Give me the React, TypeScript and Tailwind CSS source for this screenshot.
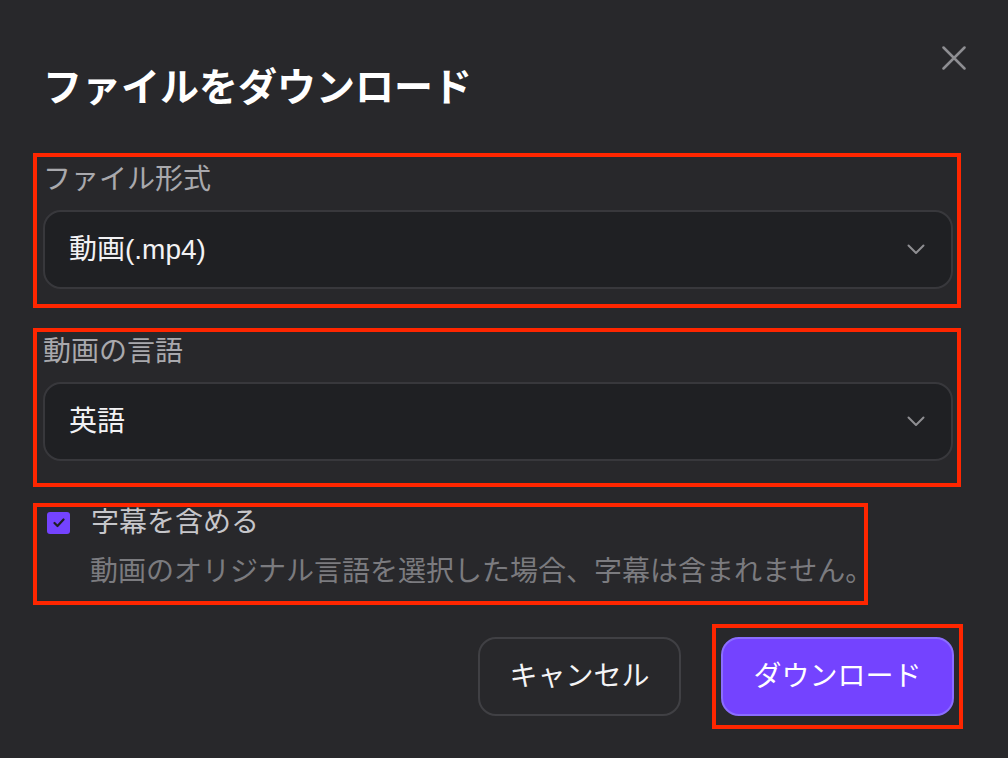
import React from "react";

const font = {
  fontFamily: '"Liberation Sans", "Noto Sans CJK JP", sans-serif',
};

const Chevron = () => (
  <svg width="18" height="11" viewBox="0 0 18 11" fill="none">
    <path d="M1.5 1.5L9 9L16.5 1.5" stroke="#8e8e92" strokeWidth="2" strokeLinecap="round" strokeLinejoin="round" />
  </svg>
);

const SelectBox = ({ value }: { value: string }) => (
  <div className="flex h-[79px] items-center justify-between rounded-[18px] border-2 border-[#38383c] bg-[#1f2023] pl-[24px] pr-[26px]">
    <span className="text-[28px] leading-[36px] text-[#f2f2f4]">{value}</span>
    <Chevron />
  </div>
);

export default function App() {
  return (
    <div style={font} className="h-[758px] w-[1008px] overflow-hidden bg-[#28282b] pl-[33px]">
      {/* header */}
      <div className="flex h-[107px] items-start justify-between pr-[42px] pt-[46px]">
        <h1 className="mt-[18px] pl-[10px] text-[39px] font-bold leading-[48px] text-white">
          ファイルをダウンロード
        </h1>
        <button className="h-[24px] w-[24px]">
          <svg width="24" height="24" viewBox="0 0 24 24" fill="none">
            <path d="M1.5 1.5L22.5 22.5M22.5 1.5L1.5 22.5" stroke="#8e8e92" strokeWidth="2.5" strokeLinecap="round" />
          </svg>
        </button>
      </div>

      {/* file format */}
      <div className="mt-[46px] w-[928px] border-4 border-[#ff2600] pb-[15px] pl-[6px] pr-[4px] pt-[5px]">
        <div className="text-[28px] leading-[36px] text-[#a9a9ad]">ファイル形式</div>
        <div className="mt-[12px]">
          <SelectBox value="動画(.mp4)" />
        </div>
      </div>

      {/* language */}
      <div className="mt-[20px] w-[928px] border-4 border-[#ff2600] pb-[22px] pl-[6px] pr-[4px] pt-[2px]">
        <div className="text-[28px] leading-[36px] text-[#a9a9ad]">動画の言語</div>
        <div className="mt-[12px]">
          <SelectBox value="英語" />
        </div>
      </div>

      {/* subtitles */}
      <div className="mt-[16px] w-[835px] border-4 border-[#ff2600] pb-[11px] pl-[10px] pt-[1px]">
        <div className="flex items-center gap-[21px]">
          <span className="flex h-[22px] w-[23px] items-center justify-center rounded-[3px] bg-[#7443ff]">
            <svg width="12" height="10" viewBox="0 0 12 10" fill="none">
              <path d="M1.5 5L4.5 8L10.5 1.5" stroke="#1f1f24" strokeWidth="2.2" strokeLinecap="round" strokeLinejoin="round" />
            </svg>
          </span>
          <span className="text-[28px] leading-[30px] text-[#c6c6ca]">字幕を含める</span>
        </div>
        <p className="mt-[16px] whitespace-nowrap pl-[43px] text-[28px] leading-[36px] text-[#7b7b7f]">
          動画のオリジナル言語を選択した場合、字幕は含まれません。
        </p>
      </div>

      {/* actions */}
      <div className="mt-[19px] flex items-center justify-end gap-[31px] pr-[45px]">
        <button className="flex h-[79px] w-[203px] items-center justify-center rounded-[18px] border-2 border-[#404044] text-[28px] text-[#f4f4f6]">
          キャンセル
        </button>
        <div className="border-4 border-[#ff2600] px-[5px] py-[9px]">
          <button className="flex h-[79px] w-[233px] items-center justify-center rounded-[18px] border-2 border-[#8b6dff] bg-[#7443ff] text-[28px] text-white">
            ダウンロード
          </button>
        </div>
      </div>
    </div>
  );
}
